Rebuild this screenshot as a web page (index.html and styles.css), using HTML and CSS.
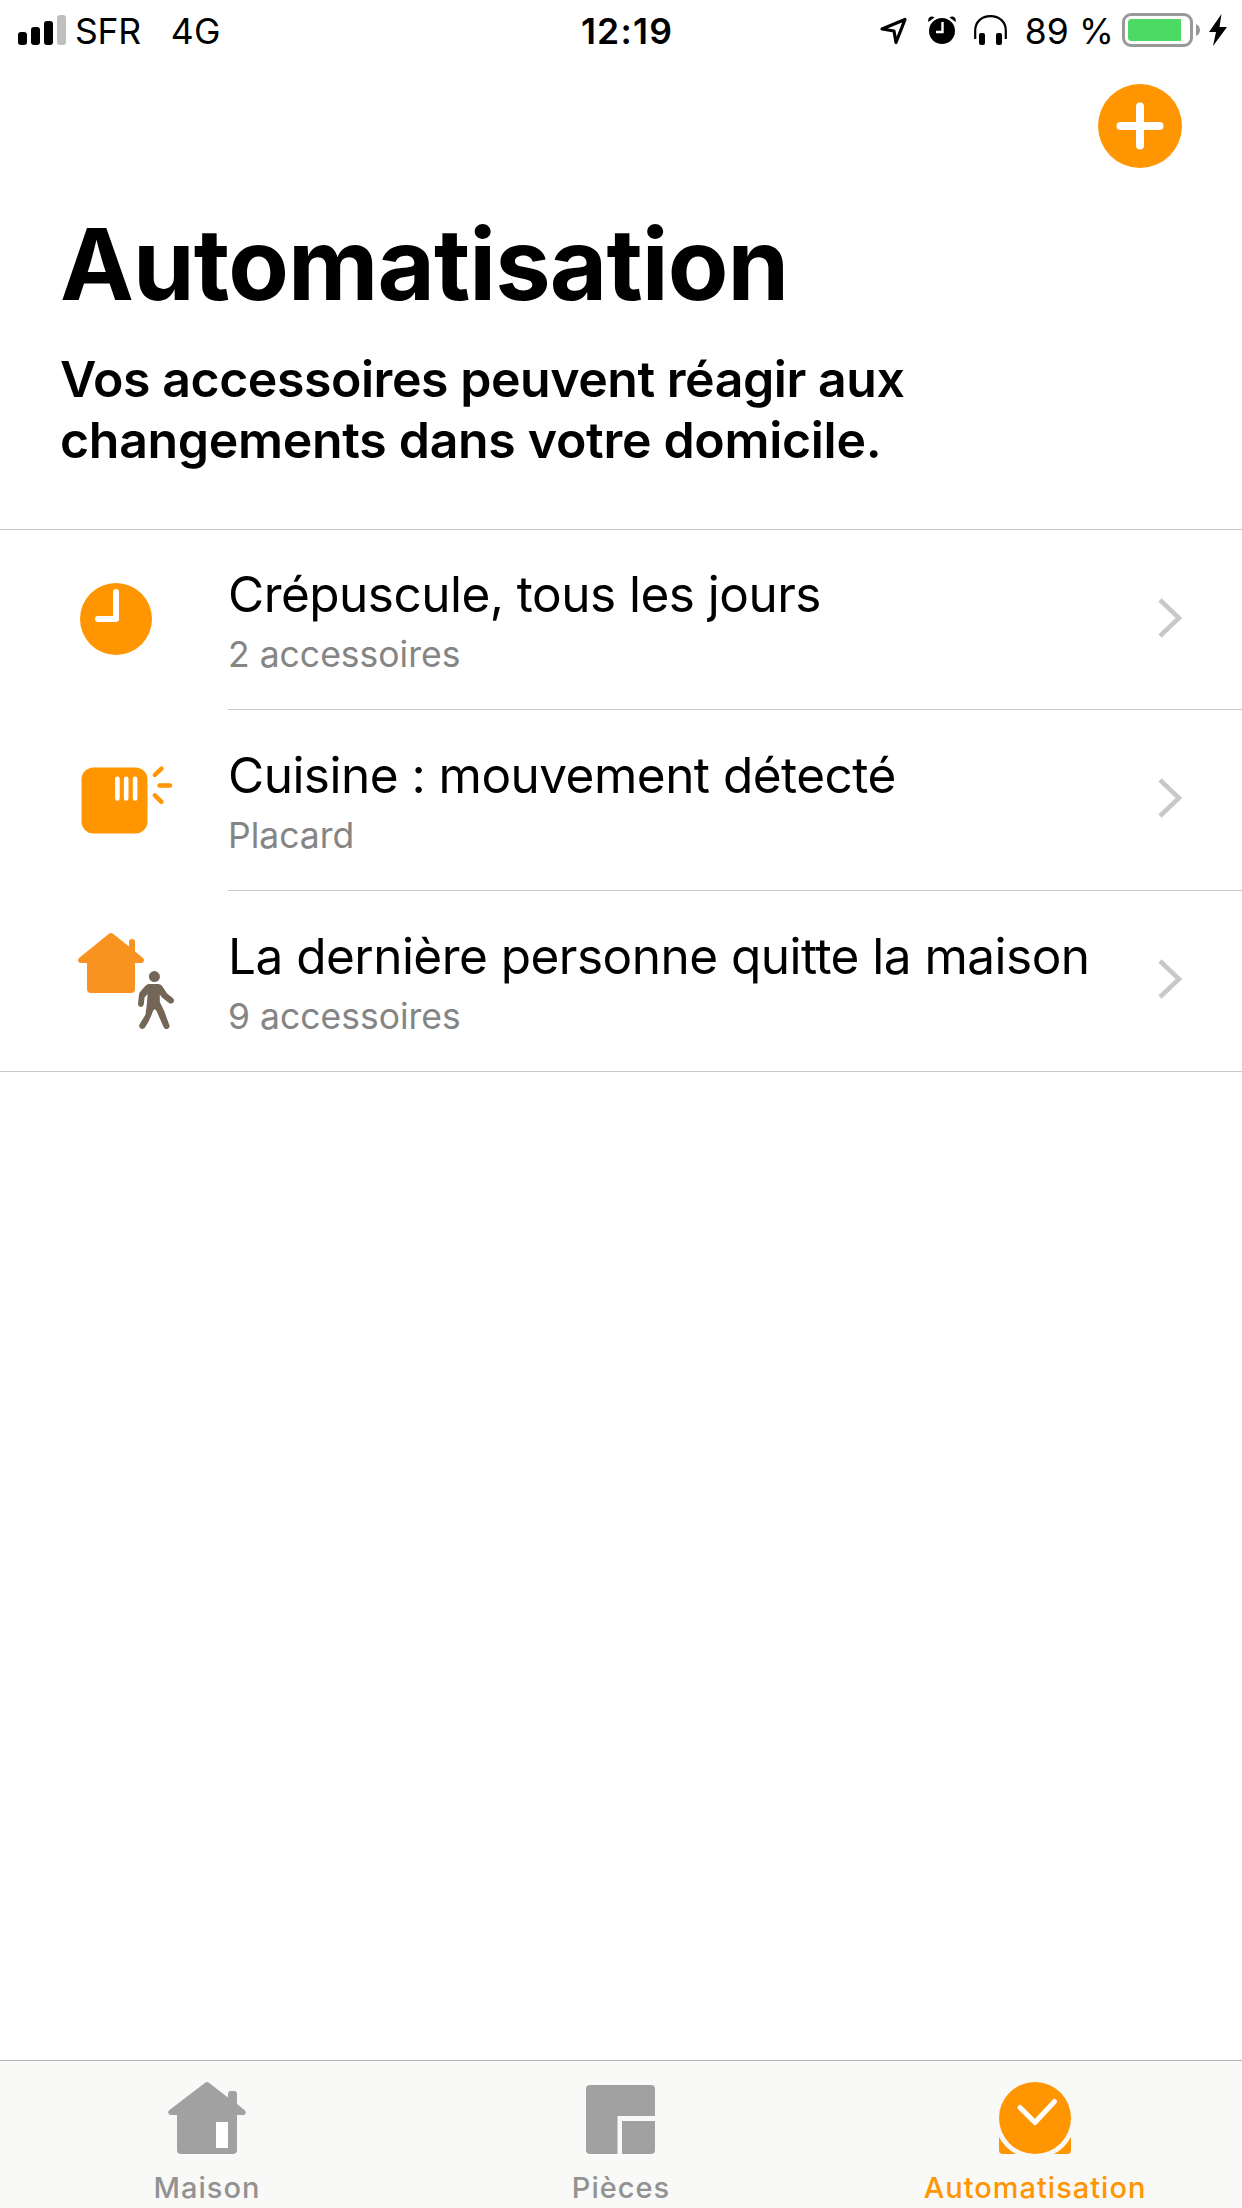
FILE: index.html
```
<!DOCTYPE html>
<html lang="fr">
<head>
  <meta charset="utf-8">
  <title>Automatisation</title>
  <link rel="stylesheet" href="styles.css">
</head>
<body>
  <div class="status-bar">
    <div class="status-left">
      <svg class="signal" width="48" height="30" viewBox="0 0 48 30">
        <rect x="0" y="17" width="9" height="13" rx="3"/>
        <rect x="13" y="12" width="9" height="18" rx="3"/>
        <rect x="26" y="6" width="9" height="24" rx="3"/>
        <rect x="39" y="0" width="9" height="30" rx="3" fill="#bfbfbf"/>
      </svg>
      <span class="carrier">SFR</span>
      <span class="network">4G</span>
    </div>
    <div class="time">12:19</div>
    <div class="status-right">
      <svg class="location" width="28" height="28" viewBox="0 0 28 28">
        <path d="M2 12 L25 2.5 L16 25.5 L14 14 Z" fill="none" stroke="#000" stroke-width="3.2" stroke-linejoin="round"/>
      </svg>
      <svg class="alarm" width="28" height="28" viewBox="0 0 28 28">
        <circle cx="14" cy="15" r="13"/>
        <path d="M0.3 6 C-0.5 1 3.5 -0.5 6.5 1.4 Z M27.7 6 C28.5 1 24.5 -0.5 21.5 1.4 Z"/>
        <path d="M14.5 6 V16 H8" fill="none" stroke="#fff" stroke-width="2.4"/>
      </svg>
      <svg class="headphones" width="33" height="30" viewBox="0 0 33 30">
        <path d="M1.2 24 V15.5 C1.2 7 7.5 1.2 16.5 1.2 S31.8 7 31.8 15.5 V24" fill="none" stroke="#000" stroke-width="2.2"/>
        <rect x="5" y="18" width="6" height="12" rx="2"/>
        <rect x="22" y="18" width="6" height="12" rx="2"/>
      </svg>
      <span class="percent">89 %</span>
      <svg class="battery" width="78" height="34" viewBox="0 0 78 34">
        <rect x="1.5" y="1.5" width="68" height="31" rx="7.5" fill="#fff" stroke="#999" stroke-width="3"/>
        <path d="M9.500 6 H59 V28 H9.500 Q6 28 6 24.500 V9.500 Q6 6 9.500 6 Z" fill="#4cd964"/>
        <path d="M74 11 Q78 13 78 17 Q78 21 74 23 Z" fill="#999"/>
      </svg>
      <svg class="bolt" width="18" height="32" viewBox="0 0 18 32">
        <path d="M12.500 0 L0 18 H7 L4 32 L18 13 H10.500 Z"/>
      </svg>
    </div>
  </div>

  <div class="header">
    <svg class="add" width="84" height="84" viewBox="0 0 84 84">
      <circle cx="42" cy="42" r="42" fill="#ff9500"/>
      <path d="M42 22.500 V61.500 M22.500 42 H61.500" stroke="#fff" stroke-width="8" stroke-linecap="round"/>
    </svg>
    <h1>Automatisation</h1>
    <p class="intro">Vos accessoires peuvent réagir aux<br><span class="intro-end">changements dans votre domicile.</span></p>
  </div>

  <div class="list">
    <div class="row">
      <div class="row-icon">
        <svg width="100" height="130" viewBox="76 555 100 130">
          <circle cx="116" cy="619" r="36" fill="#ff9500"/>
          <path d="M116 592 V619 H98" fill="none" stroke="#fff" stroke-width="6" stroke-linecap="round" stroke-linejoin="round"/>
        </svg>
      </div>
      <div class="row-body">
        <div class="row-text">
          <div class="row-title">Crépuscule, tous les jours</div>
          <div class="row-sub">2 accessoires</div>
        </div>
        <svg class="chevron" width="24" height="40" viewBox="0 0 24 40"><path d="M2 2 L21 20 L2 38" fill="none" stroke="#c7c7cc" stroke-width="4.500"/></svg>
      </div>
    </div>
    <div class="row">
      <div class="row-icon">
        <svg width="100" height="130" viewBox="76 735.500 100 130">
          <rect x="81.500" y="767" width="66" height="66" rx="12" fill="#ff9500"/>
          <path d="M117.400 778.300 V798 M126.200 778.300 V798 M135.100 778.300 V798" stroke="#fff" stroke-width="4.600" stroke-linecap="round"/>
          <path d="M154.800 774.500 L161.500 768.200 M159.500 785 H170 M154.800 794.800 L161.500 801.300" stroke="#ff9500" stroke-width="4.400" stroke-linecap="round"/>
        </svg>
      </div>
      <div class="row-body">
        <div class="row-text">
          <div class="row-title">Cuisine : mouvement détecté</div>
          <div class="row-sub">Placard</div>
        </div>
        <svg class="chevron" width="24" height="40" viewBox="0 0 24 40"><path d="M2 2 L21 20 L2 38" fill="none" stroke="#c7c7cc" stroke-width="4.500"/></svg>
      </div>
    </div>
    <div class="row">
      <div class="row-icon">
        <svg width="100" height="130" viewBox="76 916 100 130">
          <path d="M109 933.800 Q111 932.200 113 933.800 L129 946.500 V942 Q129 939 132 939 Q135 939 135 942 V951.500 L143 958 Q145 960 143.500 962 Q142.800 963 141 963 H135 V989 Q135 993 131 993 H91 Q87 993 87 989 V963 H81 Q79 963 78.300 961.500 Q77.500 959.500 79 958 Z" fill="#f7931e"/>
          <g fill="#736657">
            <circle cx="154.400" cy="976.600" r="5.500"/>
            <path d="M149 984 H158.500 Q161 984 162.500 986.500 L167 993.500 L172.800 998 Q174.800 1000 173.500 1002.200 Q171.800 1004.500 169 1003 L162 997.500 L159.800 994.500 V1002 L164 1010.500 L169.500 1025.500 Q170 1028 167.500 1029 Q165 1029.500 163.800 1027.500 L156.500 1011 Q154.800 1007.500 153 1011 Q151 1017 148 1022.500 L145 1027.500 Q143 1029.800 140.500 1028.500 Q138.500 1027 139.500 1024.500 L145.500 1014.500 Q147.200 1004 147.600 994 L144.500 997.500 L143.800 1004.500 Q143 1007 140.500 1007 Q137.800 1006.500 138 1004 L139 994.500 Q139.200 993 140 992 L145.500 985.800 Q147 984 149 984 Z"/>
          </g>
        </svg>
      </div>
      <div class="row-body">
        <div class="row-text">
          <div class="row-title">La dernière personne quitte la maison</div>
          <div class="row-sub">9 accessoires</div>
        </div>
        <svg class="chevron" width="24" height="40" viewBox="0 0 24 40"><path d="M2 2 L21 20 L2 38" fill="none" stroke="#c7c7cc" stroke-width="4.500"/></svg>
      </div>
    </div>
  </div>

  <div class="tab-bar">
    <div class="tab">
      <svg width="78" height="72" viewBox="0 0 78 72">
        <path fill="#a1a1a1" fill-rule="evenodd" d="M36.800 1 Q39 -0.800 41.200 1 L60 15.500 V12 Q60 9 63 9 H66 Q69 9 69 12 V22 L76.500 28 Q78.500 30 77.500 31.800 Q76.800 33 75 33 H69 V68 Q69 72 65 72 H13 Q9 72 9 68 V33 H3 Q1 33 0.300 31.200 Q-0.300 29.500 1.500 28 Z M48 40 V66 H60 V40 Z"/>
        <rect x="48" y="40" width="12" height="26" fill="#fff"/>
      </svg>
      <span class="tab-label">Maison</span>
    </div>
    <div class="tab">
      <svg width="70" height="72" viewBox="0 0 70 72">
        <path fill="#a1a1a1" d="M4 3 H65 Q69 3 69 7 V34 H31.500 V72 H4 Q0 72 0 68 V7 Q0 3 4 3 Z M36 39 H69 V68 Q69 72 65 72 H36 Z"/>
      </svg>
      <span class="tab-label">Pièces</span>
    </div>
    <div class="tab active">
      <svg width="72" height="72" viewBox="0 0 72 72">
        <g fill="#ff9500">
          <circle cx="36" cy="36" r="36"/>
          <path d="M0 55 A40.700 40.700 0 0 0 17 72 H4 Q0 72 0 68 Z M72 55 A40.700 40.700 0 0 1 55 72 H68 Q72 72 72 68 Z"/>
        </g>
        <path d="M21 25.500 L36 40.500 L55.500 19.500" fill="none" stroke="#fff" stroke-width="5" stroke-linecap="round" stroke-linejoin="round"/>
      </svg>
      <span class="tab-label">Automatisation</span>
    </div>
  </div>
</body>
</html>
```
FILE: styles.css
```
* {
  box-sizing: border-box;
}
body {
  margin: 0;
  width: 1242px;
  height: 2208px;
  background-color: #fff;
  color: #000;
  font-family: Inter, "Liberation Sans", sans-serif;
  display: flex;
  flex-direction: column;
  overflow: hidden;
}
svg {
  display: block;
  flex: none;
}

/* Status bar */
.status-bar {
  display: grid;
  grid-template-columns: 1fr auto 1fr;
  height: 63px;
  line-height: 63px;
  font-size: 35.5px;
  white-space: nowrap;
}
.status-left,
.status-right {
  display: flex;
  align-items: center;
}
.status-left {
  padding-left: 18px;
}
.signal {
  margin-top: -3px;
}
.carrier {
  margin-left: 9px;
  letter-spacing: -0.3px;
}
.network {
  margin-left: 30px;
  letter-spacing: 0.5px;
}
.time {
  font-weight: 600;
  letter-spacing: 1.2px;
  margin-left: 12px;
}
.status-right {
  justify-content: flex-end;
  padding-right: 15px;
}
.location {
  margin-right: 20px;
  margin-top: -2px;
}
.alarm {
  margin-right: 18px;
  margin-top: -3px;
}
.headphones {
  margin-right: 18px;
  margin-top: -3px;
}
.percent {
  letter-spacing: 0.1px;
}
.battery {
  margin: -3px 9px 0 8px;
}
.bolt {
  margin-top: -3px;
}

/* Title block */
.header {
  height: 466px;
  padding: 21px 60px 0;
}
.add {
  margin-left: auto;
}
h1 {
  margin: 36px 0 25px;
  font-size: 99px;
  line-height: 120px;
  font-weight: 700;
  letter-spacing: -0.9px;
}
.intro {
  margin: 0;
  font-size: 50px;
  line-height: 61px;
  font-weight: 600;
  letter-spacing: -0.45px;
}
.intro-end {
  letter-spacing: -0.3px;
}

/* Automation list */
.list {
  border-top: 1px solid #c8c7cc;
  border-bottom: 1px solid #c8c7cc;
}
.row {
  display: flex;
  height: 181px;
  padding-left: 76px;
}
.row:first-child {
  height: 180px;
}
.row:last-child {
  height: 180px;
}
.row-icon {
  width: 152px;
  display: flex;
  align-items: center;
}
.row-body {
  flex: 1;
  display: flex;
  align-items: center;
  justify-content: space-between;
  padding-right: 60px;
  border-bottom: 1px solid #c8c7cc;
}
.row:last-child .row-body {
  border-bottom: none;
}
.row-text {
  padding-top: 2px;
}
.row-title {
  font-size: 49.5px;
  line-height: 60px;
  white-space: nowrap;
  letter-spacing: -0.52px;
}
.row-sub {
  margin-top: 9px;
  font-size: 35.5px;
  line-height: 44px;
  color: #858585;
}
.chevron {
  margin-top: -4px;
}

/* Tab bar */
.tab-bar {
  margin-top: auto;
  height: 148px;
  display: flex;
  background-color: #f9f9f8;
  border-top: 1px solid #b2b2b2;
}
.tab {
  flex: 1;
  display: flex;
  flex-direction: column;
  align-items: center;
  padding-top: 21px;
  color: #929292;
}
.tab.active {
  color: #ff9500;
}
.tab-label {
  margin-top: 17px;
  font-size: 29px;
  line-height: 34px;
  font-weight: 450;
  letter-spacing: 1px;
}
```
